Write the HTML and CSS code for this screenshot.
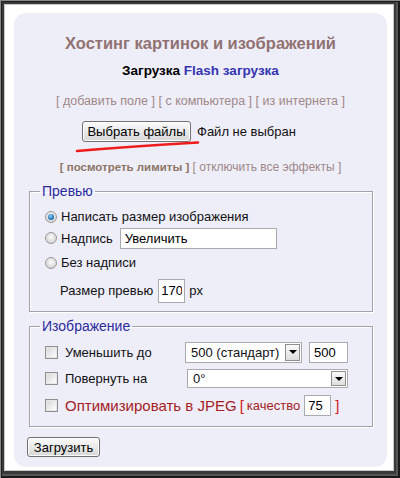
FILE: index.html
```html
<!DOCTYPE html>
<html lang="ru">
<head>
<meta charset="utf-8">
<title>Хостинг картинок и изображений</title>
<link rel="stylesheet" href="styles.css">
</head>
<body>
<div class="frame">
  <div class="sheet">
    <div class="panel">
      <h1 class="title">Хостинг картинок и изображений</h1>
      <div class="modes"><span class="mode-current">Загрузка</span> <a class="mode-link" href="#">Flash загрузка</a></div>
      <div class="sources"><a href="#">[ добавить поле ]</a> <a href="#">[ с компьютера ]</a> <a href="#">[ из интернета ]</a></div>
      <div class="file-row"><button class="btn btn-file" type="button">Выбрать файлы</button><span class="file-status">Файл не выбран</span></div>
      <div class="extras"><a class="extras-strong" href="#">[ посмотреть лимиты ]</a> <a href="#">[ отключить все эффекты ]</a></div>

      <fieldset class="group group-preview">
        <legend class="group-title">Превью</legend>
        <label class="row row-1"><span class="radio radio-on"></span><span class="label">Написать размер изображения</span></label>
        <label class="row row-2"><span class="radio"></span><span class="label">Надпись</span><input class="field field-caption" type="text" value="Увеличить"></label>
        <label class="row row-3"><span class="radio"></span><span class="label">Без надписи</span></label>
        <div class="row row-size"><span class="label">Размер превью</span><input class="field field-size" type="text" value="170"><span class="unit">px</span></div>
      </fieldset>

      <fieldset class="group group-image">
        <legend class="group-title">Изображение</legend>
        <div class="row row-a"><span class="check"></span><span class="label label-fixed">Уменьшить до</span><span class="select select-size"><span class="select-value">500 (стандарт)</span><span class="select-btn"></span></span><input class="field field-width" type="text" value="500"></div>
        <div class="row row-b"><span class="check"></span><span class="label label-fixed label-wide">Повернуть на</span><span class="select select-rotate"><span class="select-value">0°</span><span class="select-btn"></span></span></div>
        <div class="row row-c"><span class="check"></span><span class="label label-red">Оптимизировать в JPEG</span><span class="bracket">[</span><span class="quality">качество</span><input class="field field-quality" type="text" value="75"><span class="bracket bracket-close">]</span></div>
      </fieldset>

      <button class="btn btn-submit" type="button">Загрузить</button>
    </div>
  </div>
  <svg class="marker" width="400" height="478" viewBox="0 0 400 478" aria-hidden="true">
    <path d="M77 151 Q 130 146.5 198 142.5" fill="none" stroke="#f01c1c" stroke-width="2.6" stroke-linecap="round"/>
  </svg>
</div>
</body>
</html>
```
FILE: styles.css
```css
* { box-sizing: border-box; }
html, body { margin: 0; padding: 0; }
body {
  font-family: "Liberation Sans", Arial, sans-serif;
  font-size: 13px;
  color: #111;
  background: #fff;
}
.frame {
  position: relative;
  width: 400px;
  height: 478px;
  padding: 5px 7px 8px 5px;
  background: #3a3a3a;
  box-shadow: inset 1px 1px 0 #8a8a8a, inset 2px 2px 0 #1c1c1c, inset -2px -2px 0 #1a1a1a, inset -4px -4px 0 #555;
}
.sheet {
  height: 100%;
  background: #fff;
  padding: 8px 6px 3px 9px;
  box-shadow: 0 0 0 1px #c8c8c8;
}
.panel {
  height: 100%;
  background: #eeeef9;
  border-radius: 12px;
  padding: 20px 0 0 0;
}
a { text-decoration: none; color: inherit; }
.title {
  margin: 0;
  font-size: 16.5px;
  line-height: 20px;
  font-weight: bold;
  color: #917272;
  text-align: center;
}
.modes {
  margin-top: 10px;
  line-height: 16px;
  font-size: 13.5px;
  font-weight: bold;
  text-align: center;
}
.mode-current { color: #000; }
.mode-link { color: #3535b0; }
.sources {
  margin-top: 14px;
  line-height: 16px;
  text-align: center;
  color: #a08888;
  font-size: 12.5px;
}
.file-row {
  margin-top: 12px;
  height: 21px;
  display: flex;
  align-items: center;
  padding-left: 68px;
}
.btn {
  font-family: "Liberation Sans", Arial, sans-serif;
  font-size: 13px;
  color: #000;
  border: 1px solid #707070;
  border-radius: 3px;
  background: linear-gradient(#fbfbfb, #e9e9e9 50%, #d7d7d7);
  padding: 0;
  box-shadow: inset 0 0 0 1px #fdfdfd;
}
.btn-file {
  width: 109px;
  height: 21px;
}
.file-status {
  margin-left: 6px;
}
.extras {
  margin-top: 17px;
  line-height: 16px;
  text-align: center;
  color: #a08888;
  font-size: 12px;
}
.extras-strong {
  font-weight: bold;
  font-size: 11.5px;
  color: #8c7565;
}
.group {
  margin: 8px 14px 0 15px;
  border: 1px solid #a2a2a8;
  box-shadow: inset 1px 1px 0 #fff, 1px 1px 0 #fff;
  padding: 6px 0 8px 15px;
  min-width: 0;
}
.group-title {
  padding: 0 2px;
  margin-left: -5px;
  font-size: 14px;
  line-height: 17px;
  color: #2a2a9c;
}
.row {
  display: flex;
  align-items: center;
}
.row-1 { height: 21px; }
.row-2 { height: 22px; }
.row-3 { height: 21px; margin-top: 3px; }
.row-size { height: 25px; margin-top: 5px; }
.radio {
  width: 12px;
  height: 12px;
  border-radius: 50%;
  border: 1px solid #9a9a9a;
  background: radial-gradient(circle at 50% 40%, #fafafa, #d8d8d8 70%, #c4c4c4);
  margin-right: 4px;
  flex: none;
  position: relative;
}
.radio-on::after {
  content: "";
  position: absolute;
  left: 2px; top: 2px;
  width: 6px; height: 6px;
  border-radius: 50%;
  background: radial-gradient(circle at 40% 35%, #8fd0f5, #1a6fb0 65%, #0f4f8a);
}
.row-2 .label { margin-right: 7px; }
.field {
  font-family: "Liberation Sans", Arial, sans-serif;
  font-size: 13px;
  color: #000;
  background: #fff;
  border: 1px solid #a9abb0;
  padding: 0 4px;
  margin: 0;
  outline: none;
}
.field-caption { width: 157px; height: 21px; }
.row-size .label { margin-left: 15px; margin-right: 5px; }
.field-size { width: 27px; height: 24px; padding: 0 2px; }
.unit { margin-left: 4px; }

.group-image {
  margin-top: 6px;
  padding: 6px 0 10px 15px;
}
.check {
  width: 13px;
  height: 13px;
  border: 1px solid #8e8f8f;
  background: linear-gradient(135deg, #d4d4d4, #f4f4f4 70%, #fff);
  box-shadow: inset 0 0 0 1px #e6e6e6;
  flex: none;
}
.label-fixed { margin-left: 7px; width: 120px; flex: none; }
.label-wide { width: 122px; }
.row-a { height: 22px; }
.row-b { height: 19px; margin-top: 6px; }
.row-c { height: 21px; margin-top: 7px; }
.select {
  display: flex;
  align-items: center;
  background: #fff;
  border: 1px solid #a9abb0;
  padding: 1px;
}
.select-size { width: 117px; height: 21px; }
.select-rotate { width: 161px; height: 19px; }
.select-value { flex: 1; padding-left: 4px; white-space: nowrap; }
.select-btn {
  width: 15px;
  height: 100%;
  border: 1px solid #8f8f8f;
  background: linear-gradient(#fafafa, #dedede);
  position: relative;
  flex: none;
}
.select-btn::after {
  content: "";
  position: absolute;
  left: 3px; top: 50%;
  margin-top: -2px;
  border-left: 4px solid transparent;
  border-right: 4px solid transparent;
  border-top: 4px solid #000;
}
.field-width { width: 39px; height: 21px; margin-left: 7px; }
.label-red {
  margin-left: 7px;
  color: #a51d1d;
  font-size: 15px;
}
.bracket {
  color: #d42020;
  font-size: 15px;
  margin-left: 3px;
  margin-right: 3px;
}
.bracket-close { margin-left: 4px; }
.quality {
  color: #a51d1d;
  font-size: 13px;
  margin-right: 4px;
}
.field-quality { width: 27px; height: 21px; padding: 0 3px; }
.btn-submit {
  margin: 10px 0 0 13px;
  width: 73px;
  height: 20px;
}
.marker {
  position: absolute;
  left: 0;
  top: 0;
  pointer-events: none;
}
```
